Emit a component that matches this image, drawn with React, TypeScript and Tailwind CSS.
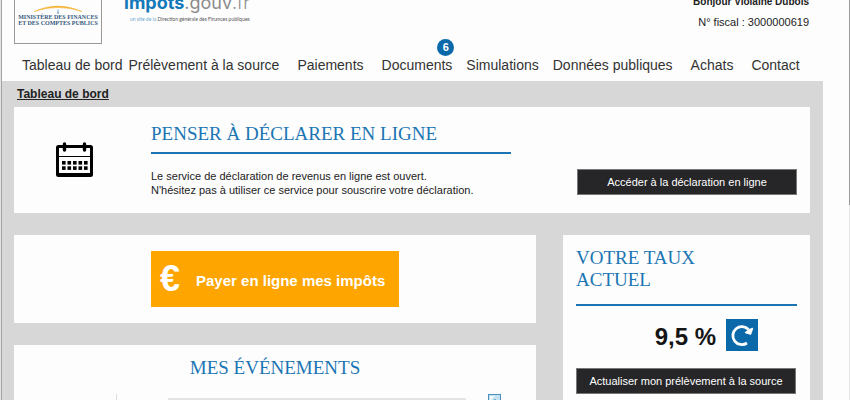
import type { ReactNode } from "react";

const NAV = [
  { label: "Tableau de bord", space: "ml-5" },
  { label: "Prélèvement à la source", space: "ml-1" },
  { label: "Paiements", space: "ml-4" },
  { label: "Documents", space: "ml-4", badge: 6 },
  { label: "Simulations", space: "ml-3" },
  { label: "Données publiques", space: "ml-3" },
  { label: "Achats", space: "ml-4" },
  { label: "Contact", space: "ml-4" },
];

function MinistryLogo() {
  return (
    <div className="flex h-11 w-[88px] flex-col items-center border border-t-0 border-[#9a9a9a] pt-1">
      <svg viewBox="0 0 50 10" className="h-[10px] w-[50px]" aria-hidden="true">
        <path d="M1 7.5 Q25 -3.5 49 7.5 Q25 -.5 1 7.5Z" fill="#f5b335" stroke="#f5b335" strokeWidth=".5" />
        <path d="M24.5 5.5 L25.5 5.5 L25.5 8 L26.5 9.5 L23.5 9.5 L24.5 8Z" fill="#7aa6c8" />
      </svg>
      <p className="text-center font-['Liberation_Serif',serif] text-[6px] leading-[6px] font-bold whitespace-nowrap text-[#355a80]">
        MINISTÈRE DES FINANCES
        <br />
        ET DES COMPTES PUBLICS
      </p>
    </div>
  );
}

function SiteLogo() {
  return (
    <div className="-mt-2.5 ml-[22px] flex flex-col items-end font-['Inter',sans-serif] whitespace-nowrap">
      <span className="text-[18px] leading-[26px] text-[#8b8b8b]">
        <span className="font-bold text-[#1479b8]">impôts</span>.gouv<span className="font-light">.fr</span>
      </span>
      <span className="font-['Lato',sans-serif] text-[5px] leading-[6px] text-[#555]">
        <span className="text-[#6ba6cf]">un site de la</span> Direction générale des Finances publiques
      </span>
    </div>
  );
}

function CalendarIcon() {
  return (
    <svg viewBox="0 0 37 36" className="h-9 w-[37px]" aria-hidden="true">
      <rect x="1.5" y="4.5" width="34" height="29" rx="1" fill="none" stroke="#000" strokeWidth="3" />
      <path d="M2 14.5H35" stroke="#000" strokeWidth="1.2" />
      <path d="M2 33H35" stroke="#000" strokeWidth="4" />
      <path d="M8.5 2V8M28.5 2V8" stroke="#000" strokeWidth="3.4" strokeLinecap="round" />
      {[7, 12.5, 18, 23.5, 29].map((x) => (
        <g key={x}>
          <rect x={x - 1} y="19" width="3.6" height="3.6" />
          <rect x={x - 1} y="24.3" width="3.6" height="3.6" />
        </g>
      ))}
    </svg>
  );
}

function RefreshIcon() {
  return (
    <svg viewBox="0 0 32 32" className="h-8 w-8" aria-hidden="true">
      <path d="M21 24 A9 9 0 1 1 22.5 10.5" fill="none" stroke="#fff" strokeWidth="2.8" />
      <path d="M26.5 9.5 L24.5 15 L19.5 13.5 L23 11Z" fill="#fff" stroke="#fff" strokeWidth="1.5" strokeLinejoin="round" />
    </svg>
  );
}

function Heading({ children, className = "" }: { children: ReactNode; className?: string }) {
  return (
    <h2 className={`font-['Liberation_Serif',serif] text-[19px] leading-[22px] text-[#1b75b4] ${className}`}>
      {children}
    </h2>
  );
}

function DarkButton({ children }: { children: ReactNode }) {
  return (
    <button
      type="button"
      className="h-[26px] w-[220px] shrink-0 border border-[#777] bg-[#262628] text-[11px] whitespace-nowrap text-white"
    >
      {children}
    </button>
  );
}

export default function App() {
  return (
    <div className="flex h-screen overflow-hidden bg-[#fdfdfd] font-['Liberation_Sans',Arial,sans-serif] text-[#222]">
      <div className="w-[2px] shrink-0 border-r border-[#a5a5a5] bg-[#e2e2e2]" />
      <div className="flex min-w-0 flex-1 flex-col">
        <header className="flex h-[81px] shrink-0 flex-col pl-3">
          <div className="flex h-[54px] items-start">
            <MinistryLogo />
            <SiteLogo />
            <div className="-mt-1 mr-10 ml-auto text-right whitespace-nowrap">
              <p className="text-[10px] leading-[12px] font-bold">Bonjour Violaine Dubois</p>
              <p className="mt-2 text-[11px] leading-[12px]">N° fiscal : 3000000619</p>
            </div>
          </div>
          <nav className="-ml-3 flex gap-0.5 text-[14px] leading-[22px] whitespace-nowrap text-[#333]">
            {NAV.map((item) => (
              <a key={item.label} href="#" className={`relative ${item.space}`}>
                {item.label}
                {item.badge && (
                  <span className="absolute -top-[15px] -right-[2px] flex size-[17px] items-center justify-center rounded-full bg-[#0b69a9] text-[11px] leading-none font-bold text-white">
                    {item.badge}
                  </span>
                )}
              </a>
            ))}
          </nav>
        </header>

        <main className="mr-[26px] flex-1 bg-[#d7d7d7] pr-[13px] pl-3">
          <div className="ml-[3px] h-[26px] text-[12px] leading-[26px] font-bold">
            <a href="#" className="underline">
              Tableau de bord
            </a>
          </div>

          <section className="flex h-[106px] bg-[#fdfdfd]">
            <div className="flex w-[137px] shrink-0 items-center pl-[42px]">
              <CalendarIcon />
            </div>
            <div className="flex-1 pt-4">
              <Heading>PENSER À DÉCLARER EN LIGNE</Heading>
              <div className="mt-[7px] h-[2px] w-[360px] bg-[#1b75b4]" />
              <p className="mt-[15px] text-[11px] leading-[14px] whitespace-nowrap">
                Le service de déclaration de revenus en ligne est ouvert.
                <br />
                N'hésitez pas à utiliser ce service pour souscrire votre déclaration.
              </p>
            </div>
            <div className="mr-[13px] flex items-end pb-[18px]">
              <DarkButton>Accéder à la déclaration en ligne</DarkButton>
            </div>
          </section>

          <div className="mt-[22px] flex gap-[27px]">
            <div className="flex min-w-0 flex-1 flex-col gap-[22px]">
              <section className="bg-[#fdfdfd] py-4 pl-[137px]">
                <button
                  type="button"
                  className="flex h-14 w-[248px] items-center bg-[#ffa500] pl-[9px] font-bold whitespace-nowrap text-white"
                >
                  <span className="w-9 text-left text-[36px] leading-[40px]">€</span>
                  <span className="pt-1 text-[15px]">Payer en ligne mes impôts</span>
                </button>
              </section>
              <section className="bg-[#fdfdfd] pt-3">
                <Heading className="text-center">MES ÉVÉNEMENTS</Heading>
                <div className="mt-[15px] flex h-10 items-start">
                  <div className="ml-[102px] h-full w-px bg-[#ddd]" />
                  <div className="mt-1 ml-[51px] h-9 w-[298px] border-2 border-[#e4e4e4]" />
                  <svg viewBox="0 0 14 14" className="ml-[22px] size-[14px]" aria-hidden="true">
                    <rect x=".5" y=".5" width="12" height="13" fill="#c5e2f2" stroke="#4a8fbe" />
                    <path d="M2 2h5l-5 5z" fill="#eef8fd" />
                    <path d="M7 5v6M4 8h6" stroke="#2c76ac" />
                  </svg>
                </div>
              </section>
            </div>
            <aside className="h-[190px] w-[247px] shrink-0 bg-[#fdfdfd] px-[13px] pt-3">
              <Heading>
                VOTRE TAUX
                <br />
                ACTUEL
              </Heading>
              <div className="mt-[13px] h-[2px] bg-[#1b75b4]" />
              <div className="mt-[13px] mb-[17px] flex items-center justify-end gap-[10px] pr-[39px]">
                <strong className="pt-1 text-[24px] leading-[28px] text-[#151515]">9,5 %</strong>
                <button type="button" aria-label="Actualiser" className="size-8 bg-[#0b69a9]">
                  <RefreshIcon />
                </button>
              </div>
              <DarkButton>Actualiser mon prélèvement à la source</DarkButton>
            </aside>
          </div>
        </main>
      </div>
      <div className="w-px shrink-0">
        <div className="h-[205px] bg-[#999]" />
        <div className="h-full bg-[#e6e6e6]" />
      </div>
    </div>
  );
}
